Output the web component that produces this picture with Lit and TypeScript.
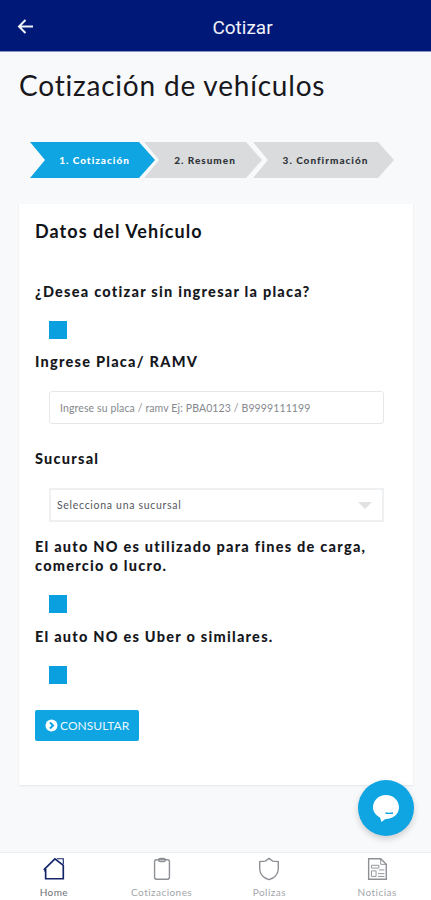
import { LitElement, html, css, svg } from "lit";
import { customElement } from "lit/decorators.js";

const steps = ["1. Cotización", "2. Resumen", "3. Confirmación"];

const icons = {
  home: svg`<path d="M3 15 L15 3 L24 10 V24.5 H5 V14"/><path d="M3.5 16.5 L5 15 M17 3 L24 3 V9" stroke-width="1.2"/>`,
  clip: svg`<rect x="6" y="4" width="16" height="21" rx="2"/><rect x="10.5" y="2.5" width="7" height="3.5" rx="1.5"/>`,
  shield: svg`<path d="M14 2.5 L18 5.5 L24 6 V14 C24 20 19 24 14 25.5 C9 24 4 20 4 14 V6 L10 5.5 Z"/>`,
  news: svg`<path d="M5 3 H18 L24 9 V25 H5 Z"/><path d="M18 3 V9 H24 M8 10 H16 V13 H8 Z M16 15 H22 M8 16 H13 V22 H8 Z M15 19 H22 M15 22 H22" stroke-width="1"/>`,
};

const tabs = [
  { label: "Home", icon: icons.home, on: true },
  { label: "Cotizaciones", icon: icons.clip, on: false },
  { label: "Polizas", icon: icons.shield, on: false },
  { label: "Noticias", icon: icons.news, on: false },
];

@customElement("app-root")
export class AppRoot extends LitElement {
  static styles = css`
    :host {
      display: block;
      width: 431px;
      height: 900px;
      position: relative;
      overflow: hidden;
      background: #f8f9fb;
      font-family: Lato, "Liberation Sans", sans-serif;
    }
    .page { display: flex; flex-direction: column; height: 900px; }
    .bar {
      height: 52px; flex: none; box-sizing: border-box; background: #001978;
      border-bottom: 1px solid #8a93c4;
      display: flex; align-items: center; justify-content: center;
      position: relative; color: #f0f2fa;
      padding: 3px 0 0 54px;
      font: 19px Roboto, sans-serif;
    }
    .back { position: absolute; left: 17px; top: 18px; width: 17px; height: 17px; }
    h1 {
      margin: 0; padding: 15px 0 0 19px; height: 36px; flex: none;
      font: 400 28px/36px Lato, sans-serif;
      letter-spacing: 0.8px; color: #17171c;
    }
    .steps { display: flex; padding: 39px 0 0 30px; height: 37px; flex: none; }
    .step {
      height: 36px; display: flex; align-items: center; justify-content: center;
      background: #d9dbdd; color: #303338; flex: none;
      font: 900 10px Lato, sans-serif; letter-spacing: 1px;
      clip-path: polygon(0 0, calc(100% - 16px) 0, 100% 50%, calc(100% - 16px) 100%, 0 100%, 15px 50%);
      padding-left: 4px; box-sizing: border-box;
    }
    .step:nth-child(1) { width: 125px; margin-right: -11px; background: #0ea5e2; color: #fff; }
    .step:nth-child(2) { width: 118px; margin-right: -9px; }
    .step:nth-child(3) { width: 141px; }
    .card {
      margin: 25px 18px 0 19px; padding: 16px 17px 0 16px; height: 581px; flex: none;
      background: #fff; box-sizing: border-box;
      box-shadow: 0 1px 2px rgba(0,0,0,.08);
      display: flex; flex-direction: column;
    }
    h2 { margin: 0; font: 700 18px/22px Lato, sans-serif; letter-spacing: 1.05px; color: #111318; }
    .label { font: 900 14.5px/19px Lato, sans-serif; letter-spacing: 1.25px; color: #16181d; }
    .l1 { margin-top: 40px; }
    .check { width: 18px; height: 18px; background: #0a9fdf; margin-left: 14px; flex: none; }
    .c1 { margin-top: 20px; }
    .l2 { margin-top: 13px; }
    .input {
      margin: 20px 12px 0 14px; height: 33px; box-sizing: border-box; flex: none;
      border: 1px solid #e6e7ea; border-radius: 3px; padding-left: 10px;
      display: flex; align-items: center;
      font: 400 10.5px Lato, sans-serif; letter-spacing: .12px; color: #85888d;
    }
    .l3 { margin-top: 25px; }
    .select {
      margin: 20px 12px 0 14px; height: 34px; box-sizing: border-box; flex: none;
      border: 2px solid #eff0f1; padding: 0 10px 0 6px;
      display: flex; align-items: center; justify-content: space-between;
      font: 400 10.5px Lato, sans-serif; letter-spacing: .7px; color: #55585d;
    }
    .tri { width: 0; height: 0; border: 7px solid transparent; border-top: 7px solid #dfe1e3; border-bottom: 0; }
    .l4 { margin-top: 15px; }
    .c2 { margin-top: 20px; }
    .l5 { margin-top: 14px; }
    .c3 { margin-top: 20px; }
    .btn {
      margin-top: 26px; width: 104px; height: 31px; border-radius: 2px; flex: none;
      background: #0ea5e2; color: #eaf7fd; display: flex; align-items: center;
      gap: 2px; padding-left: 10px; box-sizing: border-box;
      font: 400 12px Lato, sans-serif; letter-spacing: .05px;
    }
    .btn svg { width: 13px; height: 13px; flex: none; }
    .fab {
      position: absolute; left: 358px; top: 780px; width: 56px; height: 56px;
      border-radius: 50%; background: #0ea5e2;
      box-shadow: 0 3px 6px rgba(0,0,0,.18);
      display: flex; align-items: center; justify-content: center;
    }
    .fab svg { width: 30px; height: 30px; }
    .nav {
      position: absolute; left: 0; right: 0; bottom: 0; height: 47px;
      background: #fff; border-top: 1px solid #eceef0;
      display: grid; grid-template-columns: repeat(4, 1fr);
    }
    .tab {
      display: flex; flex-direction: column; align-items: center;
      font: 400 10px Lato, sans-serif; letter-spacing: .45px; color: #a3a6aa;
    }
    .tab svg {
      width: 26px; height: 26px; margin-top: 3px; fill: none;
      stroke: #8d9094; stroke-width: 1.5;
    }
    .tab span { margin-top: 4px; }
    .tab.on { color: #6d7076; }
    .tab.on svg { stroke: #142468; stroke-width: 1.8; }
  `;

  render() {
    return html`<div class="page">
        <div class="bar">
          <svg class="back" viewBox="0 0 17 17" fill="none" stroke="#f0f2fa" stroke-width="2">
            <path d="M16 8.5 H2 M8.5 2 L2 8.5 L8.5 15" />
          </svg>
          Cotizar
        </div>
        <h1>Cotización de vehículos</h1>
        <div class="steps">
          ${steps.map((s) => html`<div class="step">${s}</div>`)}
        </div>
        <div class="card">
          <h2>Datos del Vehículo</h2>
          <div class="label l1">¿Desea cotizar sin ingresar la placa?</div>
          <div class="check c1"></div>
          <div class="label l2">Ingrese Placa/ RAMV</div>
          <div class="input">Ingrese su placa / ramv Ej: PBA0123 / B9999111199</div>
          <div class="label l3">Sucursal</div>
          <div class="select">Selecciona una sucursal<i class="tri"></i></div>
          <div class="label l4">El auto NO es utilizado para fines de carga, comercio o lucro.</div>
          <div class="check c2"></div>
          <div class="label l5">El auto NO es Uber o similares.</div>
          <div class="check c3"></div>
          <div class="btn">
            <svg viewBox="0 0 13 13"><circle cx="6.5" cy="6.5" r="6" fill="#fff" /><path d="M5 3.5 L8 6.5 L5 9.5" fill="none" stroke="#0ea5e2" stroke-width="2" /></svg>
            CONSULTAR
          </div>
        </div>
      </div>
      <div class="fab">
        <svg viewBox="0 0 30 30">
          <path d="M15 2 C22.5 2 28 7.5 28 14.5 C28 21 22 26 15 26 C14 26 13 27 10.5 29 L9 24.5 C4.5 22 2 18.5 2 14.5 C2 7.5 7.5 2 15 2 Z" fill="#fff" />
          <path d="M14.5 20 Q18 20.8 22 20" fill="none" stroke="#0ea5e2" stroke-width="1.4" />
        </svg>
      </div>
      <div class="nav">
        ${tabs.map(
          (t) => html`<div class="tab ${t.on ? "on" : ""}">
            <svg viewBox="0 0 28 28">${t.icon}</svg><span>${t.label}</span>
          </div>`
        )}
      </div>`;
  }
}
